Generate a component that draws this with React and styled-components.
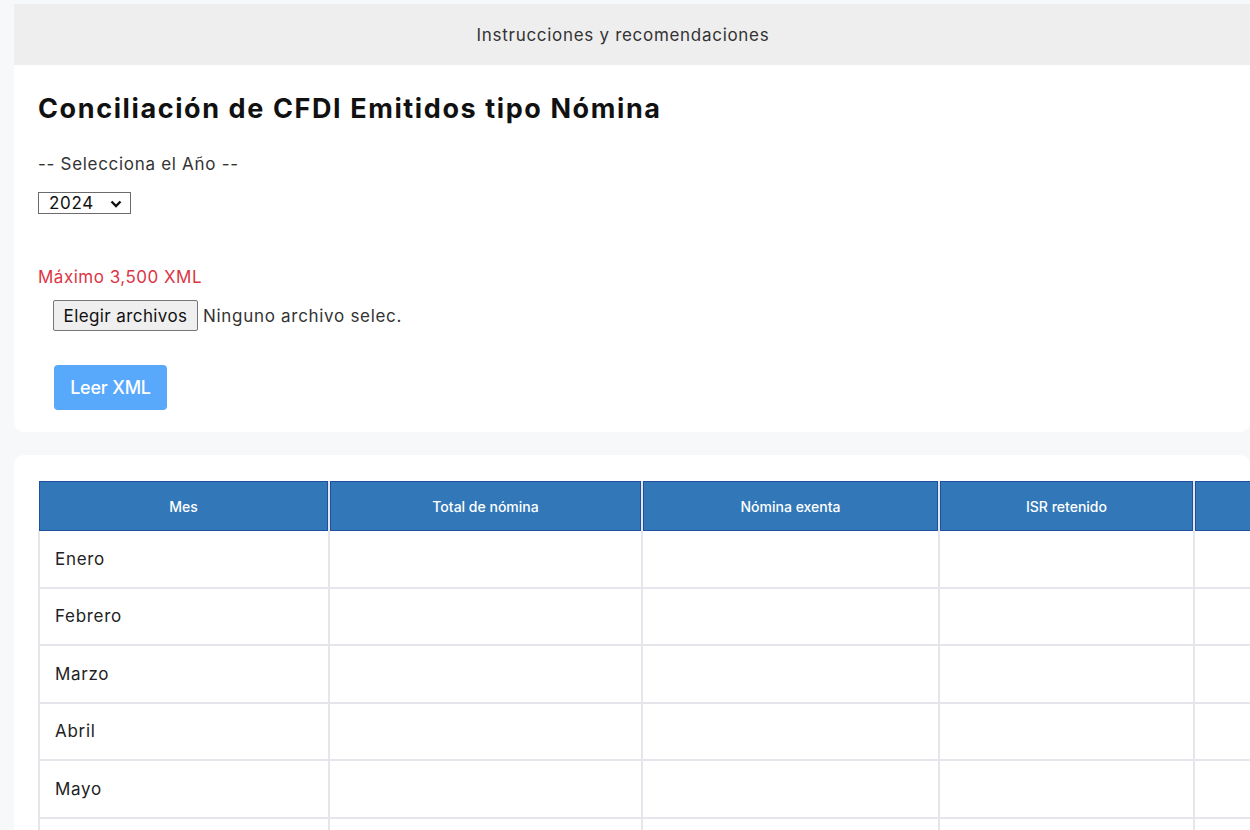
import React, { useState } from 'react';
import styled, { createGlobalStyle } from 'styled-components';

const GlobalStyle = createGlobalStyle`
  html, body {
    margin: 0;
    padding: 0;
    background: #f7f8fa;
    font-family: Inter, "Noto Sans", sans-serif;
    color: #212529;
  }
`;

const months = ['Enero', 'Febrero', 'Marzo', 'Abril', 'Mayo', 'Junio'];

const columns = [
  { label: 'Mes', width: 289 },
  { label: 'Total de nómina', width: 311 },
  { label: 'Nómina exenta', width: 295 },
  { label: 'ISR retenido', width: 253 },
  { label: '', width: 300 },
];

const App = () => {
  const [year, setYear] = useState('2024');

  return (
    <Page>
      <GlobalStyle />
      <TopBar>Instrucciones y recomendaciones</TopBar>
      <Card className="upper">
        <Title>Conciliación de CFDI Emitidos tipo Nómina</Title>
        <Label>-- Selecciona el Año --</Label>
        <SelectWrap>
          <Select value={year} onChange={e => setYear(e.target.value)}>
            <option>2022</option>
            <option>2023</option>
            <option>2024</option>
          </Select>
          <Chevron viewBox="0 0 12 8">
            <path d="M1.5 1.5 L6 6 L10.5 1.5" fill="none" stroke="#111" strokeWidth="2.4" />
          </Chevron>
        </SelectWrap>
        <Warning>Máximo 3,500 XML</Warning>
        <FileRow>
          <FileButton>Elegir archivos</FileButton>
          <span>Ninguno archivo selec.</span>
        </FileRow>
        <ReadButton>Leer XML</ReadButton>
      </Card>
      <Card className="lower">
        <Table>
          <thead>
            <tr>
              {columns.map((col, i) => (
                <th key={i} style={{ width: col.width }}>
                  {col.label}
                </th>
              ))}
            </tr>
          </thead>
          <tbody>
            {months.map(m => (
              <tr key={m}>
                <td>{m}</td>
                <td />
                <td />
                <td />
                <td />
              </tr>
            ))}
          </tbody>
        </Table>
      </Card>
    </Page>
  );
};

const Page = styled.div`
  width: 100vw;
  height: 830px;
  overflow: hidden;
  padding: 4px 0 0 14px;
  box-sizing: border-box;
  display: flex;
  flex-direction: column;
`;

const TopBar = styled.div`
  height: 61px;
  background: #eeeeee;
  display: flex;
  align-items: center;
  justify-content: center;
  padding-right: 18px;
  font-size: 17px;
  letter-spacing: 0.7px;
  color: #333;
  flex-shrink: 0;
`;

const Card = styled.section`
  background: #fff;
  padding: 0 0 0 24px;
  flex-shrink: 0;

  &.upper {
    border-radius: 0 0 10px 10px;
    padding-top: 28px;
    padding-bottom: 22px;
  }

  &.lower {
    margin-top: 23px;
    border-radius: 10px 10px 0 0;
    padding-top: 26px;
  }
`;

const Title = styled.h1`
  margin: 0 0 29px;
  font-size: 27px;
  font-weight: 700;
  letter-spacing: 1.6px;
  color: #111;
  line-height: 32px;
`;

const Label = styled.div`
  font-size: 17px;
  letter-spacing: 0.7px;
  color: #333;
  line-height: 20px;
  margin-bottom: 18px;
`;

const SelectWrap = styled.div`
  position: relative;
  width: 93px;
  height: 22px;
`;

const Select = styled.select`
  appearance: none;
  width: 93px;
  height: 22px;
  border: 1px solid #6b6b6b;
  border-radius: 0;
  background: #fff;
  font-family: Inter, sans-serif;
  font-size: 17px;
  letter-spacing: 0.7px;
  color: #111;
  padding: 0 0 0 10px;
  box-sizing: border-box;
  outline: none;
`;

const Chevron = styled.svg`
  position: absolute;
  right: 9px;
  top: 8px;
  width: 12px;
  height: 8px;
  pointer-events: none;
`;

const Warning = styled.div`
  margin-top: 53px;
  color: #dc3545;
  font-size: 17px;
  letter-spacing: 0.5px;
  line-height: 20px;
`;

const FileRow = styled.div`
  margin: 13px 0 0 15px;
  display: flex;
  align-items: center;
  gap: 5px;
  font-size: 17px;
  letter-spacing: 0.7px;
  color: #333;
`;

const FileButton = styled.button`
  font-family: Inter, sans-serif;
  font-size: 17px;
  letter-spacing: 0.4px;
  color: #111;
  background: #efefef;
  border: 1px solid #767676;
  border-radius: 2px;
  width: 145px;
  height: 31px;
  padding: 0;
`;

const ReadButton = styled.button`
  margin: 34px 0 0 16px;
  width: 113px;
  height: 45px;
  border: none;
  border-radius: 4px;
  background: #58a8fb;
  color: #fff;
  font-family: Inter, sans-serif;
  font-size: 18px;
  font-weight: 500;
  letter-spacing: -0.2px;
`;

const Table = styled.table`
  border-collapse: collapse;
  table-layout: fixed;
  width: 1448px;

  th {
    height: 50px;
    background: #3278b8;
    color: #fff;
    font-size: 14px;
    font-weight: 500;
    text-align: center;
    border-left: 2px solid #e3e6ee;
    box-shadow: inset 0 0 0 1px #1f4f9e;
    padding: 0;
  }
  th:first-child {
    border-left: none;
  }

  td {
    height: 55.5px;
    border: 2px solid #e4e6ec;
    padding: 0 0 0 15px;
    font-size: 17px;
    letter-spacing: 0.7px;
    color: #222;
  }
  tbody tr:first-child td {
    border-top: none;
  }
`;

export default App;
